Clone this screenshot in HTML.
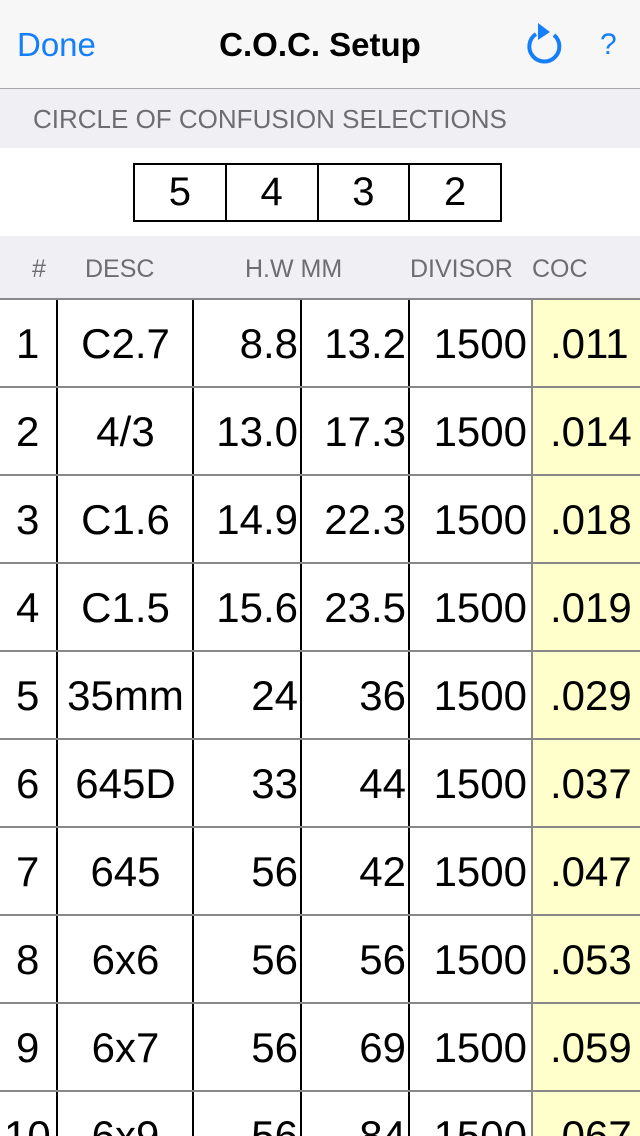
<!DOCTYPE html>
<html><head><meta charset="utf-8"><style>
*{margin:0;padding:0;box-sizing:border-box}
html,body{width:640px;height:1136px;overflow:hidden}
body{background:#fff;font-family:"Liberation Sans",Arial,sans-serif;position:relative}
.nav{position:absolute;left:0;top:0;width:640px;height:89px;background:#f7f7f7;border-bottom:1px solid #a8a8a8}
.done{position:absolute;left:17px;top:26px;font-size:33px;color:#157efb}
.title{position:absolute;left:0;width:640px;text-align:center;top:26px;font-size:33px;font-weight:bold;color:#000}
.q{position:absolute;left:600px;top:28px;font-size:30px;color:#157efb}
.sec{position:absolute;left:0;top:89px;width:640px;height:59px;background:#efeff4;color:#6d6d72;font-size:26px}
.sec span{position:absolute;left:33px;top:15px}
.seg{position:absolute;left:133px;top:163px;width:369px;height:59px;border:2px solid #000;display:flex}
.seg div{flex:1;text-align:center;font-size:40px;line-height:55px;border-left:2px solid #000}
.seg div:first-child{border-left:none}
.hdr{position:absolute;left:0;top:236px;width:640px;height:62px;background:#efeff4;color:#6d6d72;font-size:25px}
.hdr span{position:absolute;top:19px}
.row{position:absolute;left:0;width:640px;height:88px;border-top:2px solid #888;font-size:42px}
.c{position:absolute;top:0;height:88px;line-height:88px}
.v{position:absolute;top:0;height:88px;width:2px;background:#000}
.y{position:absolute;left:532px;top:298px;width:108px;height:838px;background:#ffffcc}
</style></head><body>
<div class="nav">
<div class="title">C.O.C. Setup</div>
<div class="done">Done</div>
<svg style="position:absolute;left:524px;top:20px" width="42" height="46" viewBox="0 0 42 46">
<path d="M30 15 A15 15 0 1 1 12 14" fill="none" stroke="#157efb" stroke-width="4"/>
<path d="M10 4 L22 13 L10 21 Z" fill="#157efb" transform="translate(4,-1)"/>
</svg>
<div class="q">?</div>
</div>
<div class="sec"><span>CIRCLE OF CONFUSION SELECTIONS</span></div>
<div class="seg"><div>5</div><div>4</div><div>3</div><div>2</div></div>
<div class="hdr"><span style="left:32px">#</span><span style="left:85px">DESC</span><span style="left:245px">H.W MM</span><span style="left:410px">DIVISOR</span><span style="left:532px">COC</span></div>
<div class="y"></div>
<div id="t"></div>
<script>
var d=[["1","C2.7","8.8","13.2",".011"],["2","4/3","13.0","17.3",".014"],["3","C1.6","14.9","22.3",".018"],["4","C1.5","15.6","23.5",".019"],["5","35mm","24","36",".029"],["6","645D","33","44",".037"],["7","645","56","42",".047"],["8","6x6","56","56",".053"],["9","6x7","56","69",".059"],["10","6x9","56","84",".067"]];
var h="";
d.forEach(function(r,i){var t=298+i*88;
h+='<div class="row" style="top:'+t+'px">'+
'<div class="c" style="left:'+(i==9?4:16)+'px">'+r[0]+'</div>'+
'<div class="v" style="left:56px"></div>'+
'<div class="c" style="left:58px;width:135px;text-align:center">'+r[1]+'</div>'+
'<div class="v" style="left:192px"></div>'+
'<div class="c" style="left:194px;width:104px;text-align:right">'+r[2]+'</div>'+
'<div class="v" style="left:300px"></div>'+
'<div class="c" style="left:302px;width:104px;text-align:right">'+r[3]+'</div>'+
'<div class="v" style="left:408px"></div>'+
'<div class="c" style="left:410px;width:117px;text-align:right">1500</div>'+
'<div class="v" style="left:531px;background:#888"></div>'+
'<div class="c" style="left:550px">'+r[4]+'</div></div>';});
document.getElementById("t").innerHTML=h;
</script>
</body></html>
